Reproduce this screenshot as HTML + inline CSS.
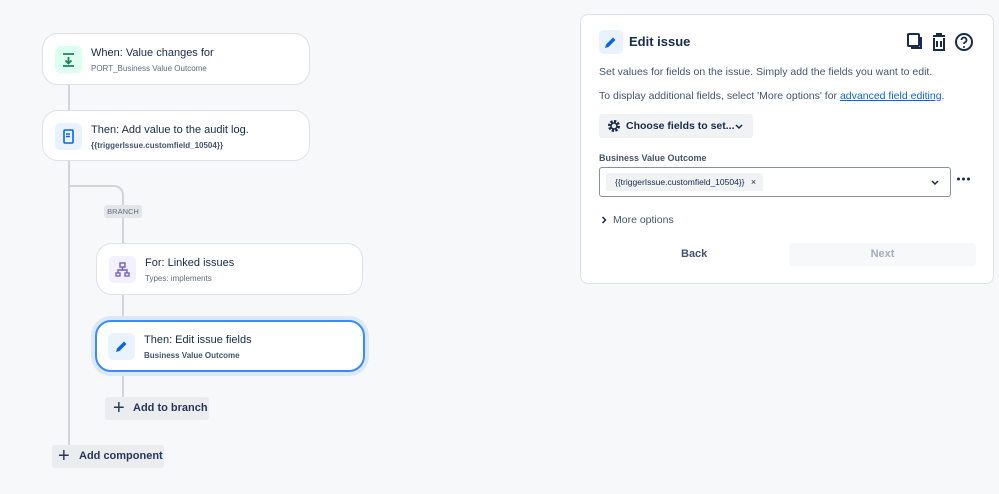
<!DOCTYPE html>
<html><head><meta charset="utf-8"><style>
*{box-sizing:border-box;margin:0;padding:0}
body{width:999px;height:494px;background:#f7f8f9;font-family:"Liberation Sans",sans-serif;color:#172b4d;position:relative;overflow:hidden}
.a{position:absolute}
.card{position:absolute;background:#fff;border:1px solid #dfe1e6;border-radius:16px}
.ic{position:absolute;left:12px;top:12px;width:27px;height:27px;border-radius:5px}
.t1{position:absolute;left:48px;top:13px;font-size:11px;color:#172b4d}
.t2{position:absolute;left:48px;top:30px;font-size:8px;color:#5e6c84}
.line{position:absolute;background:#d0d3d9}
.btn{position:absolute;background:#ebecf0;border-radius:3px;font-size:11px;font-weight:bold;color:#253858}
</style></head><body>
<div class="line" style="left:68px;top:85px;width:2px;height:360px"></div>
<div class="a" style="left:69px;top:185px;width:55px;height:20px;border-top:2px solid #d0d3d9;border-right:2px solid #d0d3d9;border-top-right-radius:10px"></div>
<div class="line" style="left:122px;top:218px;width:2px;height:180px"></div>
<div class="a" style="left:104px;top:205px;width:38px;height:13px;background:#e4e5e8;border-radius:3px;font-size:7.5px;color:#5e6c84;text-align:center;line-height:13px">BRANCH</div>

<div class="card" style="left:42px;top:33px;width:268px;height:52px">
 <div class="ic" style="background:#dcfff1"><svg width="27" height="27"><path d="M8 8h11M13.5 11v6M10.5 14.5l3 3 3-3M8 20h11" stroke="#1f845a" stroke-width="1.8" fill="none"/></svg></div>
 <div class="t1">When: Value changes for</div><div class="t2">PORT_Business Value Outcome</div></div>
<div class="card" style="left:42px;top:110px;width:268px;height:51px">
 <div class="ic" style="background:#e9f2ff"><svg width="27" height="27"><rect x="9" y="7" width="9" height="13" rx="1" stroke="#0c66e4" stroke-width="1.6" fill="none"/><path d="M11 11h4M11 13.5h4" stroke="#0c66e4" stroke-width="1.4"/></svg></div>
 <div class="t1">Then: Add value to the audit log.</div><div class="t2" style="font-weight:bold;color:#44546f">{{triggerIssue.customfield_10504}}</div></div>
<div class="card" style="left:96px;top:243px;width:267px;height:52px">
 <div class="ic" style="background:#f3f0ff"><svg width="27" height="27"><rect x="11" y="7" width="5" height="4" stroke="#6e5dc6" stroke-width="1.4" fill="none"/><path d="M13.5 11v3M9 17v-3h9v3" stroke="#6e5dc6" stroke-width="1.4" fill="none"/><rect x="7" y="17" width="4" height="3" stroke="#6e5dc6" stroke-width="1.3" fill="none"/><rect x="16" y="17" width="4" height="3" stroke="#6e5dc6" stroke-width="1.3" fill="none"/></svg></div>
 <div class="t1">For: Linked issues</div><div class="t2">Types: implements</div></div>
<div class="a" style="left:91px;top:316px;width:278px;height:60px;border-radius:20px;background:#dbe8fd"></div>
<div class="card" style="left:95px;top:320px;width:270px;height:52px;border:2px solid #388bff">
 <div class="ic" style="background:#e9f2ff;left:11px;top:11px"><svg width="27" height="27"><path d="M8 19l1-3.5 7-7 2.5 2.5-7 7z" fill="#0c66e4"/></svg></div>
 <div class="t1" style="left:47px;top:12px">Then: Edit issue fields</div><div class="t2" style="left:47px;top:29px;font-weight:bold;color:#44546f">Business Value Outcome</div></div>
<div class="btn" style="left:105px;top:397px;width:104px;height:23px"><span style="position:absolute;left:8px;top:0;font-size:20px;font-weight:normal;line-height:22px">+</span><span style="position:absolute;left:28px;top:5px">Add to branch</span></div>
<div class="btn" style="left:52px;top:445px;width:112px;height:23px"><span style="position:absolute;left:6px;top:0;font-size:20px;font-weight:normal;line-height:22px">+</span><span style="position:absolute;left:27px;top:5px">Add component</span></div>

<div class="a" style="left:580px;top:14px;width:414px;height:270px;background:#fff;border:1px solid #dfe1e6;border-radius:8px">
 <div class="a" style="left:18px;top:15px;width:24px;height:24px;border-radius:5px;background:#e9f2ff"><svg width="24" height="24"><path d="M6 18l1-3.5 7-7 2.5 2.5-7 7z" fill="#0c66e4"/></svg></div>
 <div class="a" style="left:48px;top:19px;font-size:13px;font-weight:bold">Edit issue</div>
 <svg class="a" style="left:325px;top:16px" width="70" height="22"><rect x="2" y="3" width="11" height="12" rx="1" stroke="#172b4d" stroke-width="2" fill="none"/><path d="M15 6v11H5" stroke="#172b4d" stroke-width="2" fill="none"/><path d="M27 5h12M31 5V3h4v2M28 7v12h10V7M31 10v6M35 10v6" stroke="#172b4d" stroke-width="2" fill="none"/><circle cx="58" cy="11" r="8" stroke="#172b4d" stroke-width="2" fill="none"/><path d="M55.5 9a2.5 2.5 0 1 1 3.5 2.3c-.7.4-1 .8-1 1.7" stroke="#172b4d" stroke-width="1.8" fill="none"/><circle cx="58" cy="16" r="1" fill="#172b4d"/></svg>
 <div class="a" style="left:18px;top:51px;font-size:10.5px;color:#44546f">Set values for fields on the issue. Simply add the fields you want to edit.</div>
 <div class="a" style="left:18px;top:75px;font-size:10.5px;color:#44546f">To display additional fields, select 'More options' for <span style="color:#0c66e4;text-decoration:underline">advanced field editing</span>.</div>
 <div class="a" style="left:18px;top:99px;width:154px;height:24px;background:#f1f2f4;border-radius:3px;font-size:10.5px;font-weight:bold;line-height:24px;padding-left:27px">Choose fields to set...
  <svg class="a" style="left:8px;top:5px" width="14" height="14"><circle cx="7" cy="7" r="4.5" stroke="#172b4d" stroke-width="3" stroke-dasharray="2.2 1.3" fill="none"/><circle cx="7" cy="7" r="3" stroke="#172b4d" stroke-width="1.5" fill="none"/></svg>
  <svg class="a" style="left:136px;top:10px" width="8" height="6"><path d="M1 1l3 3 3-3" stroke="#172b4d" stroke-width="1.5" fill="none"/></svg></div>
 <div class="a" style="left:18px;top:138px;font-size:9px;font-weight:bold;color:#44546f">Business Value Outcome</div>
 <div class="a" style="left:18px;top:152px;width:352px;height:30px;border:1px solid #8590a2;border-radius:3px">
  <div class="a" style="left:6px;top:5px;width:157px;height:18px;background:#f1f2f4;border-radius:2px;font-size:8.5px;line-height:18px;padding-left:9px">{{triggerIssue.customfield_10504}} <span style="font-size:9px;margin-left:4px">×</span></div>
  <svg class="a" style="left:330px;top:11px" width="10" height="8"><path d="M2 2l3 3 3-3" stroke="#172b4d" stroke-width="1.5" fill="none"/></svg></div>
 <svg class="a" style="left:375px;top:161px" width="16" height="6"><circle cx="2.5" cy="3" r="1.5" fill="#172b4d"/><circle cx="7.5" cy="3" r="1.5" fill="#172b4d"/><circle cx="12.5" cy="3" r="1.5" fill="#172b4d"/></svg>
 <svg class="a" style="left:20px;top:201px" width="6" height="8"><path d="M1.5 1l3 3-3 3" stroke="#172b4d" stroke-width="1.5" fill="none"/></svg>
 <div class="a" style="left:32px;top:199px;font-size:10.5px;color:#44546f">More options</div>
 <div class="a" style="left:100px;top:233px;font-size:11px;font-weight:bold;color:#44546f">Back</div>
 <div class="a" style="left:208px;top:228px;width:187px;height:23px;background:#f7f8f9;border-radius:3px;font-size:11px;font-weight:bold;color:#a5adba;text-align:center;line-height:23px">Next</div>
</div>
</body></html>
